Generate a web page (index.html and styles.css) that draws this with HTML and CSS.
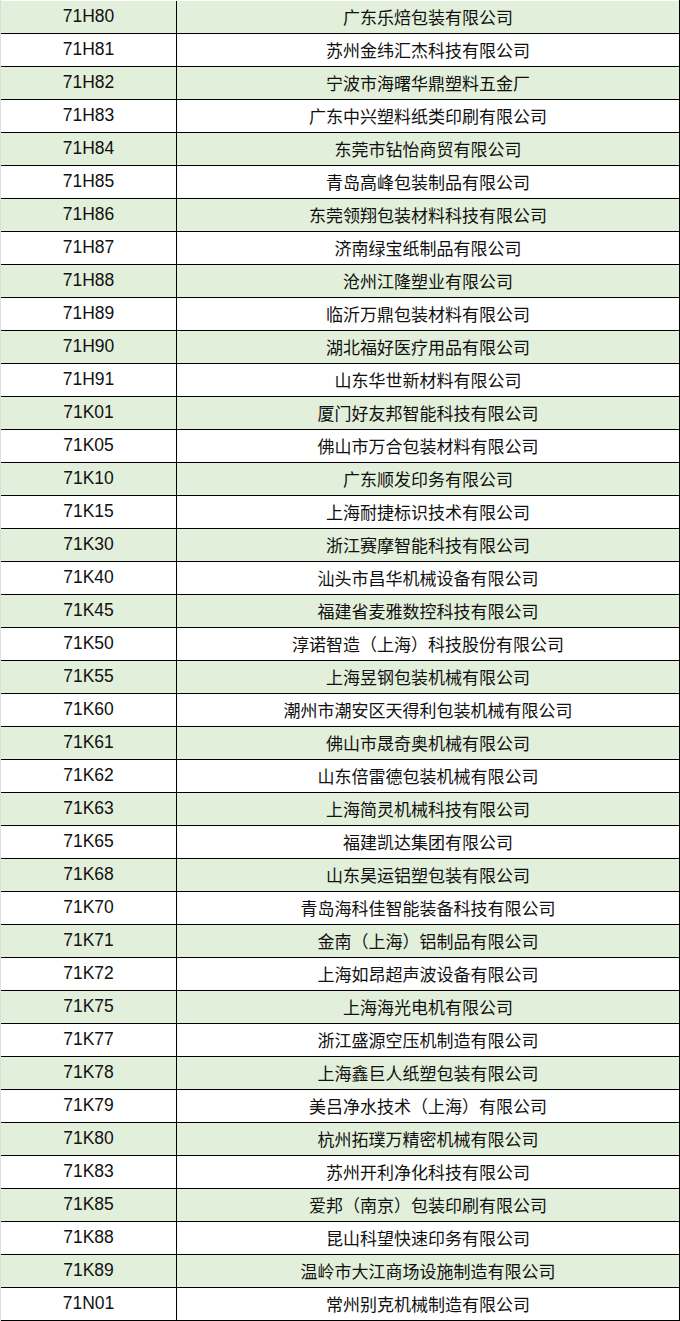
FILE: index.html
```html
<!DOCTYPE html>
<html lang="zh-CN">
<head>
<meta charset="utf-8">
<title>展商列表</title>
<link rel="stylesheet" href="styles.css">
</head>
<body>
<div class="table">
  <div class="row alt"><div class="code">71H80</div><div class="name">广东乐焙包装有限公司</div></div>
  <div class="row"><div class="code">71H81</div><div class="name">苏州金纬汇杰科技有限公司</div></div>
  <div class="row alt"><div class="code">71H82</div><div class="name">宁波市海曙华鼎塑料五金厂</div></div>
  <div class="row"><div class="code">71H83</div><div class="name">广东中兴塑料纸类印刷有限公司</div></div>
  <div class="row alt"><div class="code">71H84</div><div class="name">东莞市钻怡商贸有限公司</div></div>
  <div class="row"><div class="code">71H85</div><div class="name">青岛高峰包装制品有限公司</div></div>
  <div class="row alt"><div class="code">71H86</div><div class="name">东莞领翔包装材料科技有限公司</div></div>
  <div class="row"><div class="code">71H87</div><div class="name">济南绿宝纸制品有限公司</div></div>
  <div class="row alt"><div class="code">71H88</div><div class="name">沧州江隆塑业有限公司</div></div>
  <div class="row"><div class="code">71H89</div><div class="name">临沂万鼎包装材料有限公司</div></div>
  <div class="row alt"><div class="code">71H90</div><div class="name">湖北福好医疗用品有限公司</div></div>
  <div class="row"><div class="code">71H91</div><div class="name">山东华世新材料有限公司</div></div>
  <div class="row alt"><div class="code">71K01</div><div class="name">厦门好友邦智能科技有限公司</div></div>
  <div class="row"><div class="code">71K05</div><div class="name">佛山市万合包装材料有限公司</div></div>
  <div class="row alt"><div class="code">71K10</div><div class="name">广东顺发印务有限公司</div></div>
  <div class="row"><div class="code">71K15</div><div class="name">上海耐捷标识技术有限公司</div></div>
  <div class="row alt"><div class="code">71K30</div><div class="name">浙江赛摩智能科技有限公司</div></div>
  <div class="row"><div class="code">71K40</div><div class="name">汕头市昌华机械设备有限公司</div></div>
  <div class="row alt"><div class="code">71K45</div><div class="name">福建省麦雅数控科技有限公司</div></div>
  <div class="row"><div class="code">71K50</div><div class="name">淳诺智造（上海）科技股份有限公司</div></div>
  <div class="row alt"><div class="code">71K55</div><div class="name">上海昱钢包装机械有限公司</div></div>
  <div class="row"><div class="code">71K60</div><div class="name">潮州市潮安区天得利包装机械有限公司</div></div>
  <div class="row alt"><div class="code">71K61</div><div class="name">佛山市晟奇奥机械有限公司</div></div>
  <div class="row"><div class="code">71K62</div><div class="name">山东倍雷德包装机械有限公司</div></div>
  <div class="row alt"><div class="code">71K63</div><div class="name">上海简灵机械科技有限公司</div></div>
  <div class="row"><div class="code">71K65</div><div class="name">福建凯达集团有限公司</div></div>
  <div class="row alt"><div class="code">71K68</div><div class="name">山东昊运铝塑包装有限公司</div></div>
  <div class="row"><div class="code">71K70</div><div class="name">青岛海科佳智能装备科技有限公司</div></div>
  <div class="row alt"><div class="code">71K71</div><div class="name">金南（上海）铝制品有限公司</div></div>
  <div class="row"><div class="code">71K72</div><div class="name">上海如昂超声波设备有限公司</div></div>
  <div class="row alt"><div class="code">71K75</div><div class="name">上海海光电机有限公司</div></div>
  <div class="row"><div class="code">71K77</div><div class="name">浙江盛源空压机制造有限公司</div></div>
  <div class="row alt"><div class="code">71K78</div><div class="name">上海鑫巨人纸塑包装有限公司</div></div>
  <div class="row"><div class="code">71K79</div><div class="name">美吕净水技术（上海）有限公司</div></div>
  <div class="row alt"><div class="code">71K80</div><div class="name">杭州拓璞万精密机械有限公司</div></div>
  <div class="row"><div class="code">71K83</div><div class="name">苏州开利净化科技有限公司</div></div>
  <div class="row alt"><div class="code">71K85</div><div class="name">爱邦（南京）包装印刷有限公司</div></div>
  <div class="row"><div class="code">71K88</div><div class="name">昆山科望快速印务有限公司</div></div>
  <div class="row alt"><div class="code">71K89</div><div class="name">温岭市大江商场设施制造有限公司</div></div>
  <div class="row"><div class="code">71N01</div><div class="name">常州别克机械制造有限公司</div></div>
</div>
</body>
</html>
```
FILE: styles.css
```css
html, body {
  margin: 0;
  padding: 0;
  background: #ffffff;
}
body {
  width: 680px;
  overflow: hidden;
}
.table {
  width: 680px;
  box-sizing: border-box;
  border-left: 1px solid #dcdcdc;
  border-right: 1px solid #000;
  padding-top: 1px;
  color: #111;
}
.row {
  display: grid;
  grid-template-columns: 176px 1fr;
  height: 32px;
  border-bottom: 1px solid #000;
  background: #ffffff;
}
.row.alt {
  background: #e2efda;
}
.code {
  border-right: 1px solid #000;
  display: flex;
  align-items: center;
  justify-content: center;
  font-family: "Liberation Sans", Arial, sans-serif;
  font-size: 17.5px;
  line-height: 1;
}
.name {
  display: flex;
  align-items: center;
  justify-content: center;
  font-family: "Noto Sans CJK SC", "Noto Sans", sans-serif;
  font-size: 17px;
  line-height: 1;
  padding-bottom: 2px;
}
```
